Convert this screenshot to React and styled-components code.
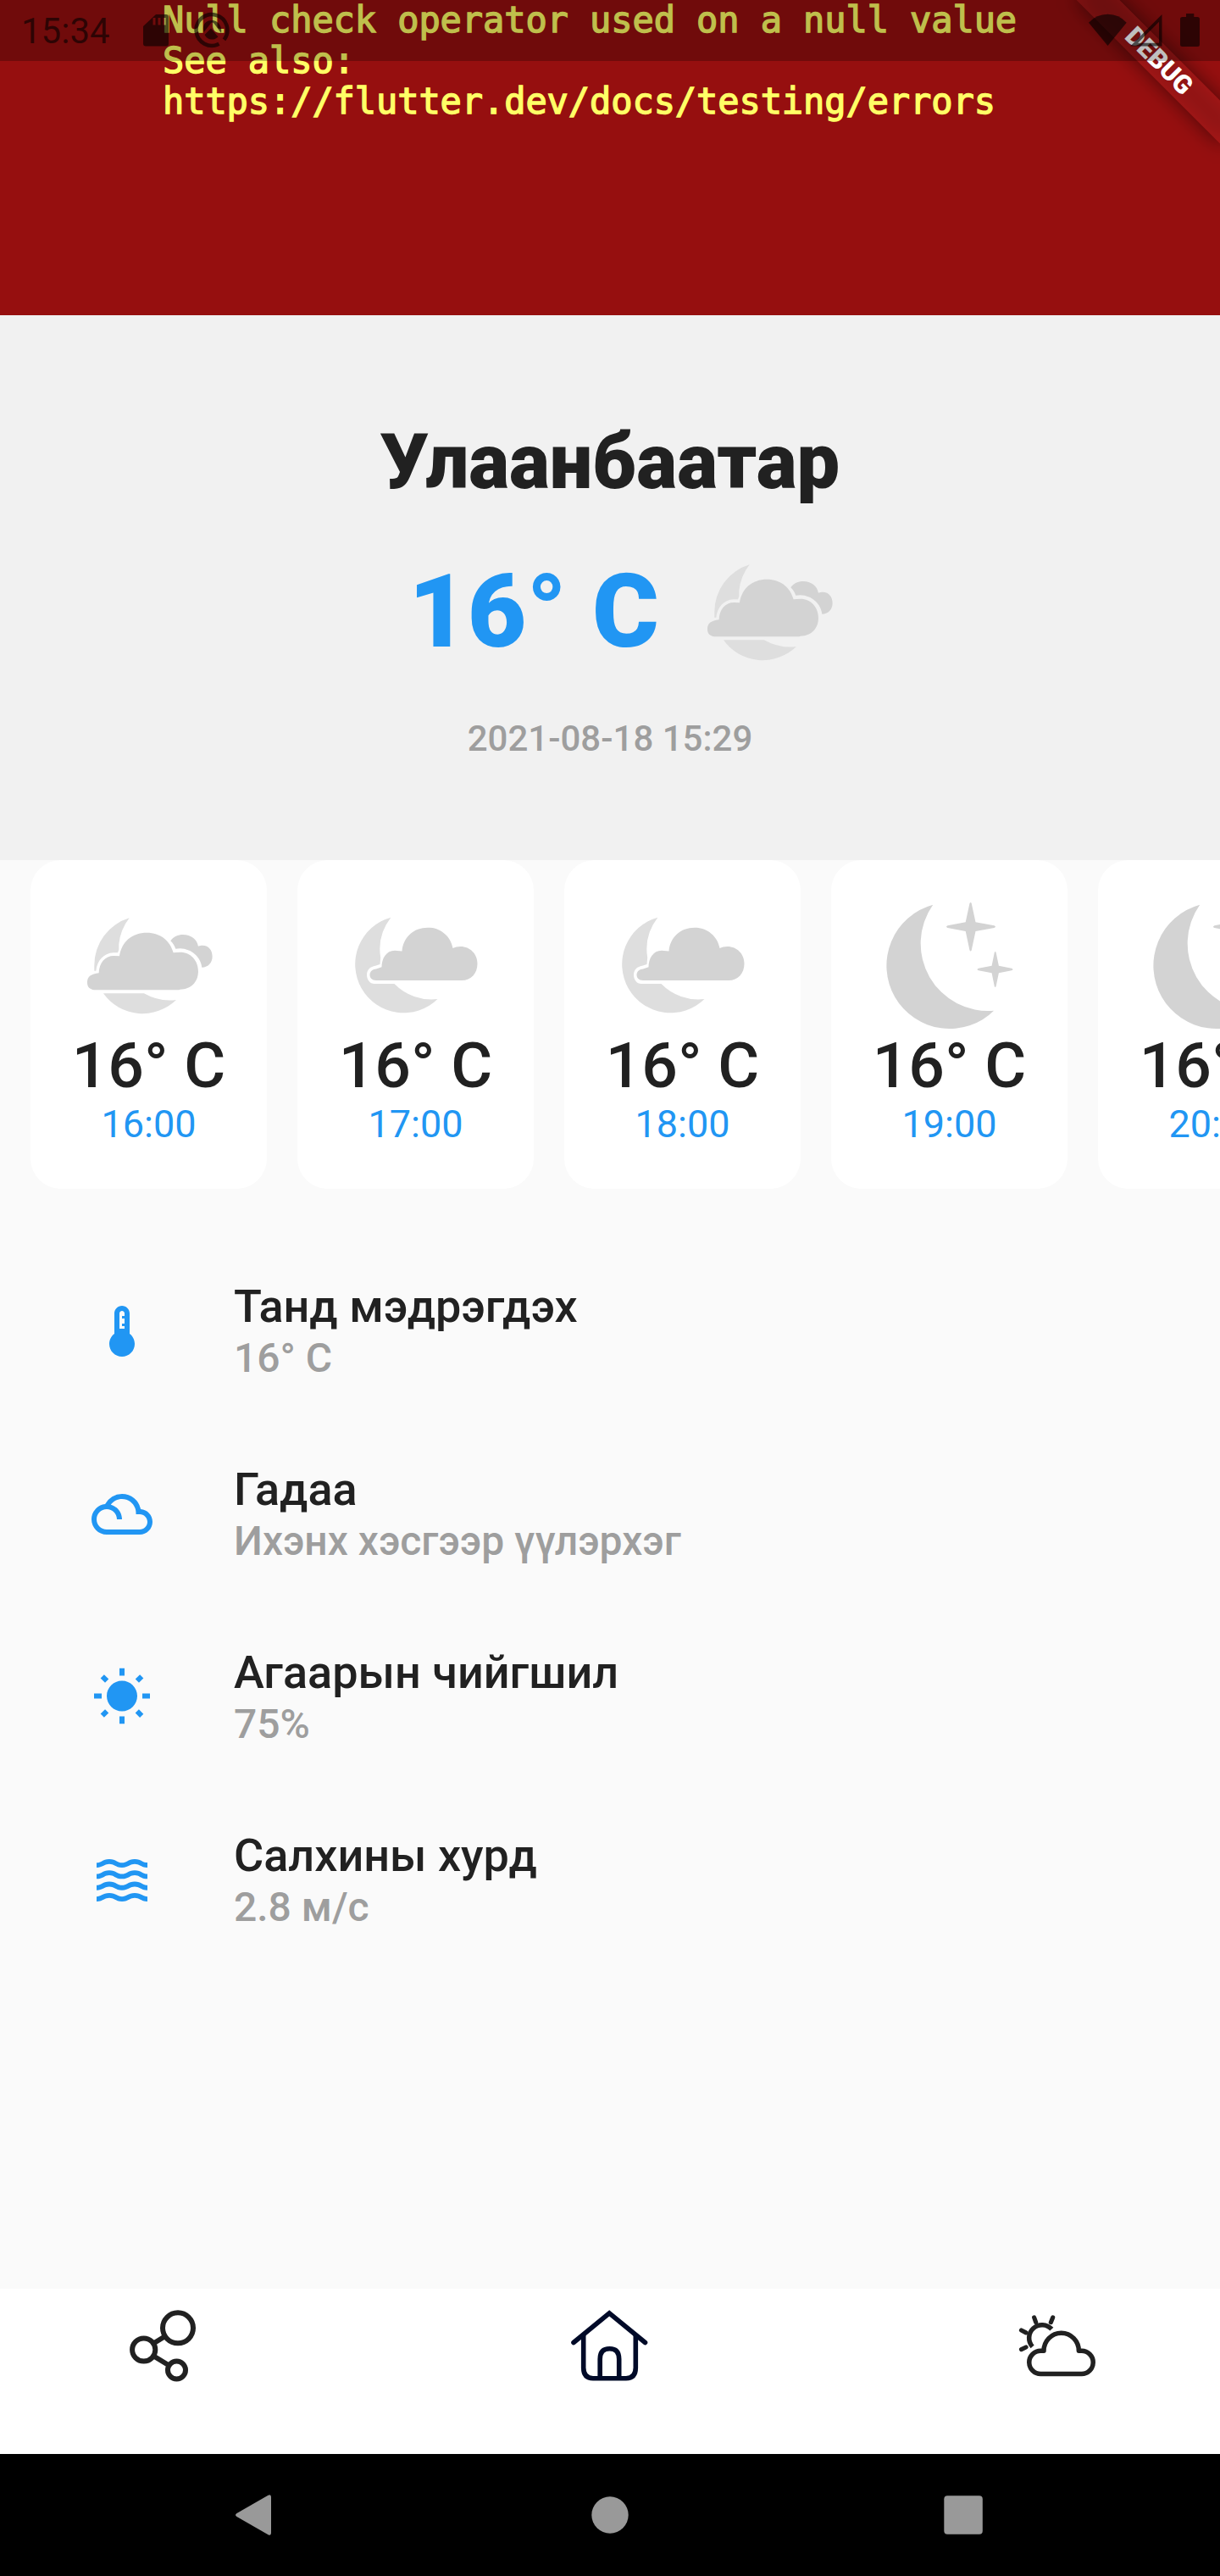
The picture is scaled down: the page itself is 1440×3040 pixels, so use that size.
import React from "react";
import styled, { createGlobalStyle } from "styled-components";
import { MdThermostat, MdFilterDrama, MdWbSunny, MdWaves } from "react-icons/md";

const GlobalStyle = createGlobalStyle`
  * { box-sizing: border-box; }
  body { margin: 0; background: #fafafa; }
  svg { display: block; flex: none; }
`;

const Screen = styled.div`
  position: relative;
  display: flex;
  flex-direction: column;
  width: 1440px;
  height: 3040px;
  overflow: hidden;
  background: #fafafa;
  color: #212121;
  font-family: Roboto, "Noto Sans", sans-serif;
`;

const ErrorPanel = styled.section`
  flex: none;
  height: 372px;
  padding: 0 192px;
  background: #960f0f;
`;

const ErrorText = styled.p`
  margin: 0;
  color: #ffff66;
  font: 400 42px/48px "DejaVu Sans Mono", monospace;
  letter-spacing: -0.085px;
  white-space: pre-line;
  -webkit-text-stroke: 1.4px #ffff66;
`;

const Ribbon = styled.div`
  position: absolute;
  left: 1247.9px;
  top: 54.1px;
  width: 240px;
  height: 36px;
  transform: rotate(45deg);

  &::before {
    content: "";
    position: absolute;
    inset: 0;
    background: rgba(0, 0, 0, 0.5);
    filter: blur(11.9px);
  }
`;

const RibbonLabel = styled.div`
  position: relative;
  height: 36px;
  background: rgba(183, 28, 28, 0.63);
  color: #fff;
  font-size: 30.6px;
  font-weight: 900;
  line-height: 36px;
  text-align: center;
`;

const StatusBar = styled.header`
  position: absolute;
  inset: 0 0 auto 0;
  display: flex;
  align-items: flex-start;
  height: 72px;
  padding: 0 27px 0 25px;
  background: rgba(0, 0, 0, 0.25);
  color: rgba(0, 0, 0, 0.6);
`;

const Clock = styled.span`
  width: 140px;
  font-size: 42px;
  line-height: 74px;
`;

const StatusSpacer = styled.div`
  flex: 1;
`;

const Hero = styled.section`
  flex: none;
  display: flex;
  flex-direction: column;
  align-items: center;
  height: 643px;
  padding-top: 121px;
  background: #f1f1f1;
`;

const City = styled.h1`
  margin: 0;
  font-size: 90px;
  font-weight: 900;
  line-height: 106px;
`;

const Current = styled.div`
  display: flex;
  align-items: center;
  gap: 50px;
  height: 140px;
  margin-top: 53px;
  padding-left: 30px;
`;

const CurrentTemp = styled.span`
  color: #2196f3;
  font-size: 120px;
  font-weight: 900;
  line-height: 140px;
`;

const Updated = styled.time`
  margin-top: 54.5px;
  color: #9e9e9e;
  font-size: 42px;
  font-weight: 500;
  line-height: 50px;
`;

const Hours = styled.section`
  flex: none;
  display: flex;
  gap: 36px;
  padding-left: 36px;
  overflow: hidden;
`;

const HourCard = styled.article`
  flex: none;
  display: flex;
  flex-direction: column;
  align-items: center;
  width: 279px;
  height: 388px;
  padding-top: 47px;
  border-radius: 36px;
  background: #fff;
`;

const HourTemp = styled.span`
  font-size: 75px;
  font-weight: 500;
  line-height: 82px;
`;

const HourTime = styled.span`
  color: #2196f3;
  font-size: 45px;
  line-height: 58px;
`;

const Details = styled.section`
  flex: 1;
  padding: 60px 0 0 108px;
`;

const DetailRow = styled.div`
  display: flex;
  align-items: center;
  gap: 96px;
  height: 216px;
  color: #2196f3;
`;

const DetailText = styled.div`
  display: flex;
  flex-direction: column;
  font-weight: 500;
`;

const DetailTitle = styled.span`
  color: #212121;
  font-size: 54px;
  line-height: 62px;
`;

const DetailValue = styled.span`
  color: #9e9e9e;
  font-size: 48px;
  line-height: 59px;
`;

const TabBar = styled.nav`
  flex: none;
  display: flex;
  justify-content: space-between;
  height: 195px;
  padding: 25px 147px 0 150px;
  background: #fff;
`;

const SystemNav = styled.nav`
  flex: none;
  display: flex;
  align-items: center;
  justify-content: space-between;
  height: 144px;
  padding: 0 279px;
  background: #000;
`;

const CARD_VIEW = { width: 160, height: 154, viewBox: "0 3 160 154" };

function CloudyNight() {
  return (
    <svg {...CARD_VIEW}>
      <g transform="translate(-6.7 8.7) scale(.33333)">
        <g fill="#dedede">
          <path d="M190 47A174 174 0 0 0 66 215V234H72C76 198 98 172 134 170H149L153 159V140A183 183 0 0 1 190 47Z" />
          <path d="M98 314H242A183 183 0 0 0 356 337A171 171 0 0 1 98 314Z" />
        </g>
        <g fill="#d3d3d3">
          <path d="M66 302C50 300 41 292 41 275C41 255 55 245 82 242C83 205 105 181 135 181L155 182C163 130 200 99 252 99C300 99 335 128 346 170L370 168C408 168 434 198 434 236C434 274 408 300 370 300L366 302Z" />
          <path d="M336 128C347 113 362 106 380 106C408 106 430 122 434 147C440 144 445 144 449 144C472 144 484 162 484 183C484 205 470 221 447 222C443 185 410 156 370 155L354 156C350 145 344 136 336 128Z" />
        </g>
      </g>
    </svg>
  );
}

function PartlyCloudyNight() {
  return (
    <svg {...CARD_VIEW}>
      <path
        fill="#dedede"
        d="M50.4 23.7A57.3 57.3 0 1 0 105.5 120A61 61 0 0 1 54.5 102H31C25.5 102 22 97 22 91.5C22 85.500 26.500 81.500 32 80.800L37.500 79L38.200 71A61 61 0 0 1 50.4 23.7Z"
      />
      <path
        fill="#d3d3d3"
        d="M33 98C28 98 25.500 95 25.500 91.500C25.500 87.500 29 84.800 33 84.600L39.500 82.300C39.500 72 45 62.700 55 62.700L63.500 63.500C65 47 77 35.700 94 35.700C109 35.700 121 46 123.500 60C126 58.800 129 58 132.500 58C144 58 152.500 67 152.500 78C152.500 90 145 98 134 98Z"
      />
    </svg>
  );
}

function ClearNight() {
  return (
    <svg {...CARD_VIEW}>
      <g fill="#d3d3d3">
        <path d="M60.200 8.700A74.500 74.500 0 1 0 132.100 133.700A79.500 79.500 0 0 1 60.200 8.700Z" />
        <path d="M103.500 7Q104.600 5 105.700 7L110.500 29.300L132.500 33.300Q135.500 34.700 132.500 36L110.500 40L105.700 62.500Q104.600 64.500 103.500 62.500L98.700 40L77.500 36Q74.500 34.700 77.500 33.300L98.700 29.300Z" />
        <path d="M132.800 65Q133.700 63 134.600 65L137.900 80.700L153 83.700Q156 85 153 86.300L137.900 89.300L134.600 105Q133.700 107 132.800 105L129.600 89.300L114 86.300Q111 85 114 83.700L129.600 80.700Z" />
      </g>
    </svg>
  );
}

const WEATHER = { cloudy: CloudyNight, partly: PartlyCloudyNight, clear: ClearNight };

const HOURS = [
  { time: "16:00", kind: "cloudy" },
  { time: "17:00", kind: "partly" },
  { time: "18:00", kind: "partly" },
  { time: "19:00", kind: "clear" },
  { time: "20:00", kind: "clear" },
];

const DETAILS = [
  { icon: MdThermostat, title: "Танд мэдрэгдэх", value: "16° C" },
  { icon: MdFilterDrama, title: "Гадаа", value: "Ихэнх хэсгээр үүлэрхэг" },
  { icon: MdWbSunny, title: "Агаарын чийгшил", value: "75%" },
  { icon: MdWaves, title: "Салхины хурд", value: "2.8 м/с" },
];

function StatusLeftIcons() {
  return (
    <svg width="110" height="72" viewBox="165 0 110 72" fill="currentColor">
      <path
        fillRule="evenodd"
        d="M184 17H196Q199 17 199 20V51.500Q199 54.500 196 54.500H172Q169 54.500 169 51.500V31ZM180.500 21V29.500H183.500V21ZM186.500 21V29.500H189.500V21ZM192.500 21V29.500H195.500V21Z"
      />
      <path
        fill="none"
        stroke="currentColor"
        strokeWidth="4.500"
        d="M258.500 51.800A18.400 18.400 0 1 1 264.500 46.800"
      />
      <path d="M240.500 38C238 28 244 24 250 24C257 24 262.500 30 261 39L252.500 27.500C251 26 249.500 26 248.500 28ZM241.500 41L249 33.500L257.500 43.500C253 48 245 48 241.500 41Z" />
    </svg>
  );
}

function StatusRightIcons() {
  return (
    <svg width="133" height="72" viewBox="1280 0 133 72" fill="currentColor" overflow="visible">
      <path d="M1285 26.700Q1294 17 1307.500 16.800Q1321 17 1329.700 26.700L1307.500 54Z" />
      <path fillRule="evenodd" d="M1334.200 54.500L1371.500 17V54.500ZM1343 50.700H1368V25.700Z" />
      <path d="M1400 16H1409.300V20H1413.500Q1416 20 1416 22.500V52.500Q1416 55 1413.500 55H1395.500Q1393 55 1393 52.500V22.500Q1393 20 1395.500 20H1400Z" />
    </svg>
  );
}

function ShareIcon() {
  return (
    <svg width="84" height="84" viewBox="150 2726 84 84" fill="none" stroke="#212121" strokeWidth="6" overflow="visible">
      <circle cx="210" cy="2747.300" r="18" />
      <circle cx="169.700" cy="2773" r="13.600" />
      <circle cx="208.500" cy="2797" r="10.500" />
      <path d="M182 2765L195 2757M181.500 2780.500L199.500 2791.500" />
    </svg>
  );
}

function HomeIcon() {
  return (
    <svg width="90" height="84" viewBox="674 2726 90 84" fill="none" stroke="#000a28" strokeWidth="5.600" overflow="visible">
      <path strokeLinecap="round" d="M677 2764.500L719.200 2729.800L761.500 2764.500" />
      <path d="M688.700 2755V2794Q688.700 2806.700 700 2806.700H739Q750.300 2806.700 750.300 2794V2755" />
      <path d="M708.200 2806V2784Q708.200 2771.800 719.500 2771.800Q730.700 2771.800 730.700 2784V2806" />
    </svg>
  );
}

function ForecastIcon() {
  return (
    <svg width="90" height="84" viewBox="39 33 270 252" fill="none" stroke="#212121" strokeWidth="16.500" overflow="visible">
      <path strokeLinejoin="round" d="M126 178A62 63.500 0 0 1 250 178H260A40.700 40.700 0 0 1 260 259.500H115A40.700 40.700 0 0 1 115 178Z" />
      <path d="M86 163A45 45 0 0 1 154 101" />
      <path strokeLinecap="round" d="M92 60L98 77M158 60L151 77M46.500 105L63 113.500M46.500 173L63 165" strokeWidth="15.500" />
    </svg>
  );
}

export default function App() {
  return (
    <>
      <GlobalStyle />
      <Screen>
        <ErrorPanel>
          <ErrorText>
            {"Null check operator used on a null value\nSee also: \nhttps://flutter.dev/docs/testing/errors"}
          </ErrorText>
        </ErrorPanel>
        <Hero>
          <City>Улаанбаатар</City>
          <Current>
            <CurrentTemp>16° C</CurrentTemp>
            <CloudyNight />
          </Current>
          <Updated>2021-08-18 15:29</Updated>
        </Hero>
        <Hours>
          {HOURS.map(({ time, kind }) => {
            const Weather = WEATHER[kind];
            return (
              <HourCard key={time}>
                <Weather />
                <HourTemp>16° C</HourTemp>
                <HourTime>{time}</HourTime>
              </HourCard>
            );
          })}
        </Hours>
        <Details>
          {DETAILS.map(({ icon: Icon, title, value }) => (
            <DetailRow key={title}>
              <Icon size={72} />
              <DetailText>
                <DetailTitle>{title}</DetailTitle>
                <DetailValue>{value}</DetailValue>
              </DetailText>
            </DetailRow>
          ))}
        </Details>
        <TabBar>
          <ShareIcon />
          <HomeIcon />
          <ForecastIcon />
        </TabBar>
        <SystemNav>
          <svg width="48" height="48" viewBox="0 0 48 48" fill="#999" overflow="visible">
            <path d="M37.500 .8Q41 -1 41 3V45Q41 49 37.500 47.200L.5 26Q-2.500 24 .5 22Z" />
          </svg>
          <svg width="48" height="48" viewBox="0 0 48 48" fill="#999">
            <circle cx="24" cy="24" r="21.700" />
          </svg>
          <svg width="48" height="48" viewBox="0 0 48 48" fill="#999">
            <rect x="1.300" y="1.200" width="45.500" height="45.600" rx="4" />
          </svg>
        </SystemNav>
        <Ribbon>
          <RibbonLabel>DEBUG</RibbonLabel>
        </Ribbon>
        <StatusBar>
          <Clock>15:34</Clock>
          <StatusLeftIcons />
          <StatusSpacer />
          <StatusRightIcons />
        </StatusBar>
      </Screen>
    </>
  );
}
